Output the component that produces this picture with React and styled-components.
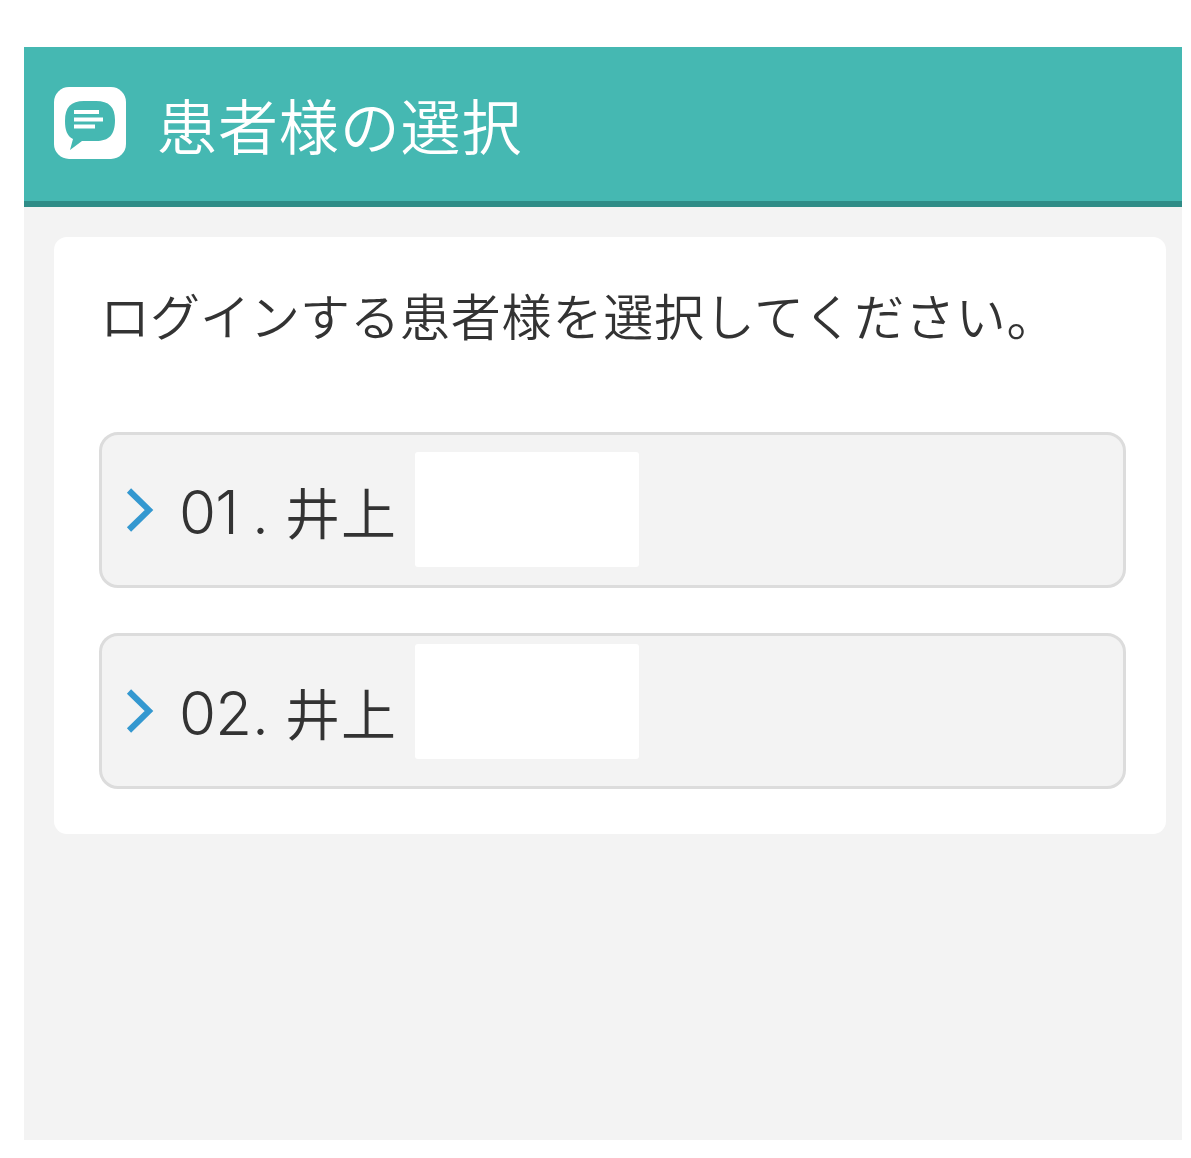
import React from 'react'
import styled, { createGlobalStyle } from 'styled-components'

const GlobalStyle = createGlobalStyle`
  body {
    margin: 0;
    background: #fff;
    color: #333;
    font-family: "Noto Sans CJK JP", sans-serif;
    font-weight: 350;
  }
`

const Page = styled.div`
  box-sizing: border-box;
  width: 1158px;
  height: 1093px;
  margin: 47px 0 0 24px;

  background: #f3f3f3; /* light gray */
`

const Header = styled.header`
  display: flex;
  align-items: center;
  box-sizing: border-box;
  height: 160px;
  padding: 0 0 2px 30px;

  background: #45b8b2; /* teal */
  border-bottom: 6px solid #2f8c87;
`

const Title = styled.h1`
  margin: 2px 0 0 31px;

  color: #fff;
  font-size: 60px;
  font-weight: 350;
  letter-spacing: 0.9px;
  line-height: 80px;
`

const Card = styled.main`
  box-sizing: border-box;
  width: 1112px;
  height: 597px;
  margin: 30px 0 0 30px;
  padding: 37px 40px 0 45px;

  background: #fff;
  border-radius: 13px;
`

const Message = styled.p`
  margin: 0 0 78px 1px;

  font-size: 50px;
  letter-spacing: 0.8px;
  line-height: 80px;
  white-space: nowrap;
`

const Kana = styled.span`
  letter-spacing: ${(props) => props.$spacing}px;
`

const List = styled.div`
  display: grid;
  gap: 45px;
`

const Row = styled.a`
  display: flex;
  align-items: flex-start;
  box-sizing: border-box;
  height: 156px;
  padding-left: 24px;

  background: #f3f3f3;
  border: 3px solid #dcdcdc;
  border-radius: 19px;
`

const Arrow = styled.svg`
  flex: none;
  margin-top: 53px;
`

const Number = styled.span`
  display: flex;
  width: 106px;
  margin: 37px 0 0 25px;

  font-family: Inter, sans-serif;
  font-size: 60px;
  font-weight: 300;
  line-height: 80px;
`

const Digits = styled.span`
  width: 73px;
  letter-spacing: -0.8px;
`

const Name = styled.span`
  width: 130px;
  margin-top: 35px;

  font-size: 55px;
  letter-spacing: 1px;
  line-height: 80px;
`

const Blank = styled.span`
  width: 224px;
  height: 115px;
  margin-top: ${(props) => props.$top}px;

  background: #fff;
  border-radius: 3px;
`

const patients = [
  { number: '01', name: '井上', top: 17 },
  { number: '02', name: '井上', top: 8 },
]

const Logo = () => (
  <svg width="72" height="72" viewBox="0 0 72 72">
    <rect width="72" height="72" rx="15" fill="#fff" />
    <path
      d="M30 14H42C55 14 61 20 61 33C61 48 55 54 42 54H28L16 63L19 52C13 49 11 43 11 34C11 20 17 14 30 14Z"
      fill="#45b8b2"
    />
    <path d="M20 25H45M20 32.5H49M20 39.5H41" stroke="#fff" strokeWidth="4" />
  </svg>
)

const Patient = (props) => {
  return (
    <Row>
      <Arrow width="28" height="44" viewBox="0 0 28 44">
        <path d="M3 2.5L23 22L3 41.5" fill="none" stroke="#3498d0" strokeWidth="6" />
      </Arrow>
      <Number>
        <Digits>{props.number}</Digits>.
      </Number>
      <Name>{props.name}</Name>
      <Blank $top={props.top} />
    </Row>
  )
}

const App = () => {
  return (
    <Page>
      <GlobalStyle />
      <Header>
        <Logo />
        <Title>患者様の選択</Title>
      </Header>
      <Card>
        <Message>
          <Kana $spacing={0}>ログインする</Kana>
          患者様を選択
          <Kana $spacing={0.8}>してください。</Kana>
        </Message>
        <List>
          {patients.map((patient) => (
            <Patient key={patient.number} {...patient} />
          ))}
        </List>
      </Card>
    </Page>
  )
}

export default App
